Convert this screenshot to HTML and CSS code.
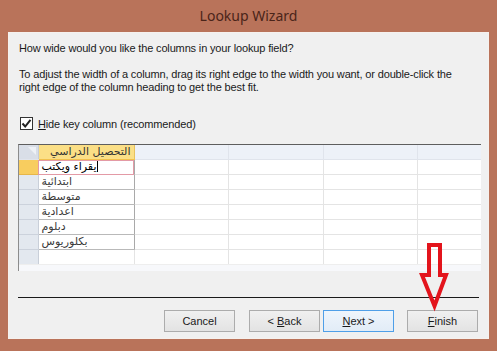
FILE: index.html
```html
<!DOCTYPE html>
<html lang="en">
<head>
    <meta charset="UTF-8">
    <title>Lookup Wizard</title>
    <link rel="stylesheet" href="styles.css">
</head>
<body>
    <div class="window">
        <div class="titlebar">Lookup Wizard</div>
        <div class="content">
            <p class="question">How wide would you like the columns in your lookup field?</p>
            <p class="hint">To adjust the width of a column, drag its right edge to the width you want, or double-click the right edge of the column heading to get the best fit.</p>
            <label class="check">
                <span class="box">
                    <svg width="11" height="11" viewBox="0 0 11 11"><path d="M1.5 5.5 L4.2 8.5 L9.5 1.8" fill="none" stroke="#222" stroke-width="2"/></svg>
                </span>
                <span><u>H</u>ide key column (recommended)</span>
            </label>

            <div class="sheet">
                <table>
                    <colgroup>
                        <col class="c-sel"><col class="c-main"><col class="c-a"><col class="c-b"><col class="c-c"><col class="c-d">
                    </colgroup>
                    <tr class="head">
                        <td class="corner"><span class="tri"></span></td>
                        <td class="main-head">التحصيل الدراسي</td>
                        <td></td><td></td><td></td><td></td>
                    </tr>
                    <tr class="current">
                        <td class="sel"></td>
                        <td class="main edit"><span class="ar">يقراء ويكتب</span><span class="caret"></span></td>
                        <td></td><td></td><td></td><td></td>
                    </tr>
                    <tr><td class="sel"></td><td class="main">ابتدائية</td><td></td><td></td><td></td><td></td></tr>
                    <tr><td class="sel"></td><td class="main">متوسطة</td><td></td><td></td><td></td><td></td></tr>
                    <tr><td class="sel"></td><td class="main">اعدادية</td><td></td><td></td><td></td><td></td></tr>
                    <tr><td class="sel"></td><td class="main">دبلوم</td><td></td><td></td><td></td><td></td></tr>
                    <tr><td class="sel"></td><td class="main">بكلوريوس</td><td></td><td></td><td></td><td></td></tr>
                    <tr class="blank"><td class="sel"></td><td></td><td></td><td></td><td></td><td></td></tr>
                </table>
            </div>

            <div class="rule"></div>

            <div class="buttons">
                <button class="btn">Cancel</button>
                <button class="btn back">&lt; <u>B</u>ack</button>
                <button class="btn next"><u>N</u>ext &gt;</button>
                <button class="btn finish"><u>F</u>inish</button>
            </div>
        </div>

        <svg class="arrow" width="40" height="72" viewBox="0 0 40 72">
            <polygon points="10,2 21,2 21,32 27,32 15.5,63 3,32 10,32" fill="none" stroke="#e3141c" stroke-width="4" stroke-linejoin="miter"/>
        </svg>
    </div>
</body>
</html>
```

FILE: styles.css
```css
/* Window frame */
body {
    margin: 0;
    padding: 0;
    background: #b9735a;
    font-family: 'Liberation Sans', Arial, sans-serif;
    font-size: 11px;
    letter-spacing: -0.15px;
    color: #1a1a1a;
}

.window {
    position: relative;
    width: 497px;
    height: 351px;
    background: #b9735a;
    overflow: hidden;
}

.titlebar {
    height: 32px;
    line-height: 32px;
    text-align: center;
    font-family: 'Noto Sans', sans-serif;
    font-size: 14px;
    letter-spacing: 0;
    color: #4a2419;
}

.content {
    margin: 0 8px 0 8px;
    height: 305px;
    background: #f0f0f0;
    border: 1px solid #f6f1ee;
    padding: 0 0 0 10px;
}

.question {
    margin: 8px 0 0 0;
    line-height: 15px;
}

.hint {
    margin: 12px 0 0 0;
    line-height: 13px;
    width: 450px;
}

/* Checkbox */
.check {
    display: flex;
    align-items: center;
    gap: 5px;
    margin-top: 22px;
    height: 15px;
}

.box {
    width: 11px;
    height: 11px;
    border: 1px solid #333333;
    background: #ffffff;
    display: flex;
    margin-left: 1px;
}

/* Datasheet */
.sheet {
    margin-top: 13px;
    margin-left: -1px;
    width: 462px;
    height: 126px;
    background: #f7f8fb;
    border-top: 1px solid #5e5e5e;
    border-left: 1px solid #8c8c8c;
    overflow: hidden;
}

table {
    border-collapse: collapse;
    table-layout: fixed;
    width: 462px;
}

.c-sel { width: 19px; }
.c-main { width: 96px; }
.c-a { width: 94px; }
.c-b { width: 95px; }
.c-c { width: 94px; }
.c-d { width: 64px; }

td {
    height: 14px;
    padding: 0 3px;
    border-right: 1px solid #e4e4e4;
    border-bottom: 1px solid #e4e4e4;
    background: #ffffff;
    font-family: 'DejaVu Sans', sans-serif;
    font-size: 11px;
    letter-spacing: 0;
    line-height: 14px;
    white-space: nowrap;
    overflow: hidden;
}

.head td {
    background: #edf1f8;
    border-right-color: #e0e4ec;
    border-bottom-color: #e0e4ec;
}

.head .corner {
    position: relative;
    background: #d9dee7;
    border-right-color: #c7cdd8;
}

.tri {
    position: absolute;
    right: 2px;
    top: 2px;
    width: 0;
    height: 0;
    border-left: 8px solid transparent;
    border-top: 8px solid #eef1f6;
}

.head .main-head {
    background: #fbdf86;
    border-right-color: #e7c25e;
    border-bottom-color: #f1c04c;
    text-align: right;
    color: #333333;
}

.sel {
    background: #e3e8ef;
    border-right-color: #c9cfd9;
    border-bottom-color: #ccd2dc;
}

.current .sel {
    background: #f8cd5f;
    border-bottom-color: #e6b649;
}

.main {
    border-right-color: #a9a9a9;
    border-bottom-color: #b9b9b9;
    color: #3a3a3a;
}

.main.edit {
    outline: 1px solid #e39aa6;
    outline-offset: -1px;
    color: #000000;
}

.ar {
    unicode-bidi: isolate;
    direction: rtl;
}

.caret {
    display: inline-block;
    width: 1px;
    height: 12px;
    background: #000000;
    vertical-align: -2px;
}

.blank td {
    border-bottom-color: #eeeeee;
}

/* Bottom rule and buttons */
.rule {
    margin-top: 26px;
    width: 461px;
    height: 1px;
    background: #1a1a1a;
    margin-left: -1px;
}

.buttons {
    display: flex;
    margin-top: 12px;
    padding-left: 145px;
}

.btn {
    width: 71px;
    height: 22px;
    padding: 0;
    font-family: 'Liberation Sans', Arial, sans-serif;
    font-size: 11px;
    color: #1a1a1a;
    background: linear-gradient(#f0f0f0, #e3e3e3);
    border: 1px solid #acacac;
    border-radius: 0;
}

.back {
    margin-left: 14px;
}

.next {
    margin-left: 3px;
    border-color: #4f9fe8;
    background: linear-gradient(#eef5fc, #e2ecf7);
}

.finish {
    margin-left: 13px;
}

/* Red marker drawn over the dialog */
.arrow {
    position: absolute;
    left: 419px;
    top: 243px;
}
```
